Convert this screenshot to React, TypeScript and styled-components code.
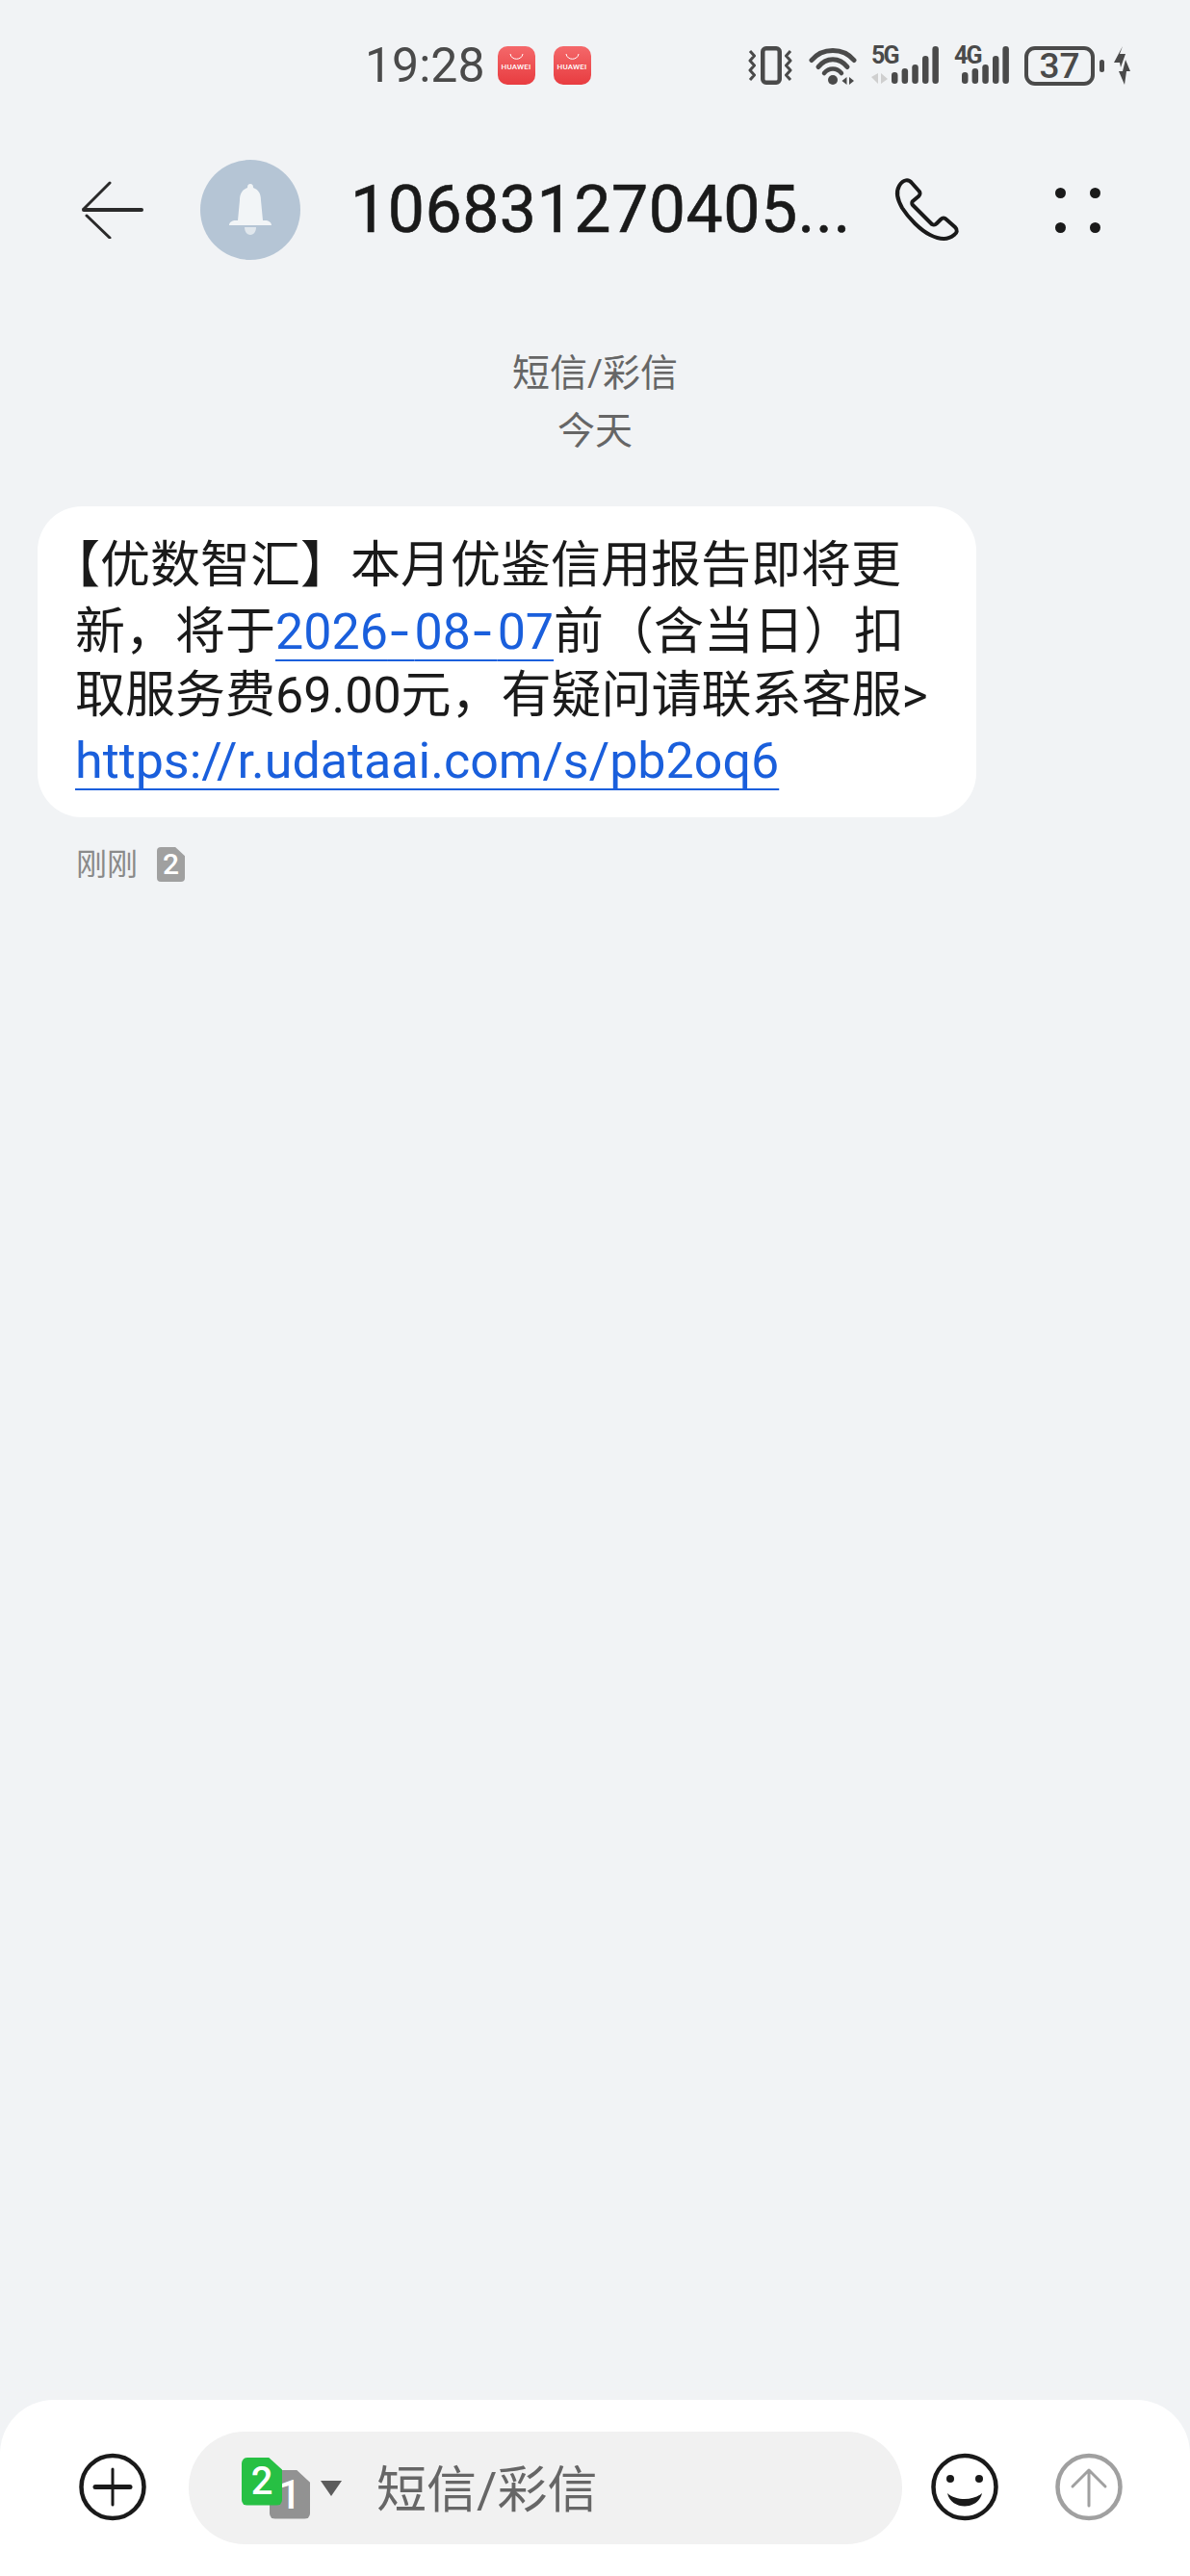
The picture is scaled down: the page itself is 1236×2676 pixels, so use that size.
import styled, { createGlobalStyle } from "styled-components";

const CJK = `Roboto, "Noto Sans CJK SC", sans-serif`;

const GlobalStyle = createGlobalStyle`
  html, body {
    margin: 0;
    padding: 0;
    background: #f1f3f5;
  }
  * {
    box-sizing: border-box;
  }
`;

const Screen = styled.div`
  width: 1236px;
  height: 2676px;
  display: flex;
  flex-direction: column;
  background: #f1f3f5;
  font-family: ${CJK};
  overflow: hidden;
`;

const StatusBar = styled.div`
  height: 136px;
  flex: none;
  display: flex;
  align-items: center;
  padding: 0 62px 0 379px;
  color: #4a4a4a;
`;

const Time = styled.span`
  font-size: 50px;
  margin-right: 13px;
`;

const AppBadge = styled.div`
  width: 39px;
  height: 40px;
  margin-right: 19px;
  padding-top: 6px;
  border-radius: 10px;
  background: linear-gradient(180deg, #f4686a, #e83c40);
  color: #fff;
  display: flex;
  flex-direction: column;
  align-items: center;
  font-size: 8px;
  line-height: 9px;
  font-weight: 500;
  font-family: Roboto, sans-serif;
  letter-spacing: 0.2px;
  svg {
    margin: 2px 0 3px;
  }
`;

const StatusIcons = styled.div`
  margin-left: auto;
  display: flex;
  align-items: center;
`;

const Network = styled.div<{ $gap: number; $w: number }>`
  position: relative;
  height: 40px;
  margin-left: ${(p) => p.$gap}px;
  width: ${(p) => p.$w}px;
`;

const NetLabel = styled.span`
  position: absolute;
  left: 0;
  top: -3px;
  font-family: Roboto, sans-serif;
  font-weight: 700;
  font-size: 25px;
  line-height: 26px;
  letter-spacing: -1.8px;
  color: #4a4a4a;
`;

const Battery = styled.div`
  width: 73px;
  height: 41px;
  margin-left: 16px;
  border: 4px solid #4a4a4a;
  border-radius: 11px;
  display: flex;
  align-items: center;
  justify-content: center;
  font-size: 37px;
  font-weight: 500;
  line-height: 1;
  color: #4a4a4a;
`;

const BatteryNub = styled.div`
  width: 5px;
  height: 13px;
  margin-left: 5px;
  border-radius: 3px;
  background: #4a4a4a;
`;

const Header = styled.div`
  height: 164px;
  flex: none;
  display: flex;
  align-items: center;
  padding-left: 85px;
`;

const Avatar = styled.div`
  width: 104px;
  height: 104px;
  margin-left: 59px;
  border-radius: 50%;
  background: #b5c5d5;
  display: flex;
  align-items: center;
  justify-content: center;
`;

const Title = styled.div`
  width: 515px;
  margin-left: 52px;
  font-size: 68px;
  font-weight: 400;
  letter-spacing: 0.5px;
  -webkit-text-stroke: 0.6px #1a1a1a;
  color: #1a1a1a;
  white-space: nowrap;
`;

const CallIcon = styled.svg`
  margin-left: 41px;
  flex: none;
`;

const MoreDots = styled.div`
  display: grid;
  grid-template-columns: 11px 11px;
  grid-template-rows: 11px 11px;
  gap: 25px;
  margin-left: 91px;
  span {
    border-radius: 50%;
    background: #1a1a1a;
  }
`;

const Thread = styled.div`
  flex: 1;
  padding-top: 58px;
`;

const SectionLabel = styled.div`
  text-align: center;
  font-size: 39px;
  line-height: 60px;
  color: #666;
`;

const Bubble = styled.div`
  width: 975px;
  height: 323px;
  margin: 48px 0 0 39px;
  padding: 28px 0 0 39px;
  border-radius: 46px;
  background: #fff;
  color: #1a1a1a;
  font-size: 52px;
`;

const MsgLine = styled.div`
  height: 67.7px;
  line-height: 68px;
  white-space: nowrap;
`;

const OpenBracket = styled.span`
  font-feature-settings: "halt";
`;

const MsgLink = styled.span`
  color: #1a5fdc;
  text-decoration: underline 2px #1a5fdc;
  text-decoration-skip-ink: none;
  text-underline-offset: 10.5px;
`;

const DateDash = styled.span`
  font-family: Inter, sans-serif;
  letter-spacing: 3.7px;
`;

const MetaRow = styled.div`
  display: flex;
  align-items: center;
  margin: 29px 0 0 79px;
  color: #8a8a8a;
  font-size: 32px;
  line-height: 40px;
`;

const SimBadge = styled.span<{ $w: number; $h: number; $bg: string; $size: number }>`
  display: flex;
  align-items: center;
  justify-content: center;
  border-radius: ${(p) => p.$w * 0.14}px;
  width: ${(p) => p.$w}px;
  height: ${(p) => p.$h}px;
  background: ${(p) => p.$bg};
  clip-path: polygon(0 0, 66% 0, 100% 26%, 100% 100%, 0 100%);
  color: #fff;
  font-family: Roboto, sans-serif;
  font-weight: 500;
  font-size: ${(p) => p.$size}px;
`;

const MetaSim = styled.div`
  margin-left: 20px;
`;

const Composer = styled.div`
  height: 183px;
  flex: none;
  display: flex;
  align-items: flex-start;
  padding: 33px 0 0 82px;
  background: #fff;
  border-radius: 56px 56px 0 0;
`;

const RoundIcon = styled.svg`
  margin-top: 22px;
  flex: none;
`;

const Input = styled.div`
  width: 741px;
  height: 117px;
  margin: 0 30px 0 44px;
  padding-left: 55px;
  border-radius: 58px;
  background: #f1f1f1;
  display: flex;
  align-items: center;
`;

const SimStack = styled.div`
  position: relative;
  width: 71px;
  height: 64px;
  flex: none;
`;

const SimFront = styled.div`
  position: absolute;
  left: 0;
  top: 0;
  z-index: 1;
`;

const SimBack = styled.div`
  position: absolute;
  right: 0;
  bottom: 0;
`;

const Caret = styled.div`
  width: 0;
  height: 0;
  margin: 1px 0 0 11px;
  border-left: 11.5px solid transparent;
  border-right: 11.5px solid transparent;
  border-top: 16px solid #5c5c5c;
`;

const Placeholder = styled.span`
  margin: 0 0 5px 36px;
  font-size: 52px;
  color: #666;
`;

const SendIcon = styled(RoundIcon)`
  margin-left: 59px;
`;

const Vibrate = () => (
  <svg width="46" height="40" viewBox="0 0 46 40" fill="none" stroke="#4a4a4a" strokeLinejoin="round">
    <rect x="15.25" y="2.25" width="17.5" height="35.5" rx="3.5" strokeWidth="4.5" />
    <path d="M2 5l4.5 5L2 15l4.5 5L2 25l4.5 5L2 35M44 5l-4.5 5 4.5 5-4.5 5 4.5 5-4.5 5 4.5 5" strokeWidth="3" />
  </svg>
);

const Wifi = () => (
  <svg width="50" height="40" viewBox="0 0 50 40" fill="none" stroke="#4a4a4a" strokeLinecap="round" style={{ marginLeft: 17 }}>
    <path d="M3 14.5C14 1 36 1 47 14.5" strokeWidth="5" />
    <path d="M10 21.5C18 11 32 11 40 21.5" strokeWidth="5" />
    <path d="M16 28C21 22 29 22 34 28" strokeWidth="4.5" />
    <circle cx="25" cy="35" r="5" fill="#4a4a4a" stroke="none" />
    <path d="M39.5 32v8l-5-4zM42 40v-8l5 4z" fill="#4a4a4a" stroke="none" />
  </svg>
);

const BARS = [
  { x: 0, top: 27 },
  { x: 10.6, top: 23 },
  { x: 21.3, top: 19 },
  { x: 32, top: 10 },
  { x: 42.4, top: 0 },
];

const SignalBars = ({ left, transfer }: { left: number; transfer?: boolean }) => (
  <svg width={left + 50} height="40" viewBox={`0 0 ${left + 50} 40`} style={{ position: "absolute", left: 0, top: 0 }}>
    {transfer && <path d="M7 28v11l-7-7zM10 39V28l7 6z" fill="#cfcfcf" />}
    {BARS.map((b) => (
      <rect key={b.x} x={left + b.x} y={b.top} width="6.5" height={39 - b.top} rx="3.2" fill="#4a4a4a" />
    ))}
  </svg>
);

const Bolt = () => (
  <svg width="17" height="40" viewBox="0 0 17 40" fill="#4a4a4a" style={{ marginLeft: 10 }}>
    <path d="M9 0L0 17h6l1 5 5-14H6zM12 14l5 12h-4l-2 14-6-14h4z" />
  </svg>
);

const BellIcon = () => (
  <svg width="50" height="54" viewBox="0 0 50 54" fill="#f2f5f7">
    <path d="M25 0c2 0 3 1 3 4 6 2 8 7 8 13l2 21 2 0c4 0 7 2 7 5H3c0-3 3-5 7-5l2 0 2-21c0-6 2-11 8-13 0-3 1-4 3-4z" />
    <path d="M19 45h12c0 4-2 8-6 8s-6-4-6-8z" opacity="0.7" />
  </svg>
);

const HuaweiMark = () => (
  <svg width="15" height="6" viewBox="0 0 15 6" fill="none" stroke="#fff" strokeWidth="1">
    <path d="M1 0c1 7 12 7 13 0" />
  </svg>
);

export default function App() {
  return (
    <Screen>
      <GlobalStyle />
      <StatusBar>
        <Time>19:28</Time>
        <AppBadge>
          <HuaweiMark />
          HUAWEI
        </AppBadge>
        <AppBadge>
          <HuaweiMark />
          HUAWEI
        </AppBadge>
        <StatusIcons>
          <Vibrate />
          <Wifi />
          <Network $gap={15} $w={70}>
            <NetLabel>5G</NetLabel>
            <SignalBars left={21} transfer />
          </Network>
          <Network $gap={16} $w={57}>
            <NetLabel>4G</NetLabel>
            <SignalBars left={8} />
          </Network>
          <Battery>37</Battery>
          <BatteryNub />
          <Bolt />
        </StatusIcons>
      </StatusBar>

      <Header>
        <svg width="64" height="60" viewBox="0 0 64 60" fill="none" stroke="#2a2a2a" strokeLinecap="round">
          <path d="M29 2L2 29" strokeWidth="3" />
          <path d="M2 30h60" strokeWidth="4" />
          <path d="M5 36l24 23" strokeWidth="3" />
        </svg>
        <Avatar>
          <BellIcon />
        </Avatar>
        <Title>106831270405...</Title>
        <CallIcon width="85" height="85" viewBox="0 0 85 85" fill="none" stroke="#1a1a1a" strokeWidth="4" strokeLinejoin="round">
          <path d="M14 17C18 10 24 10 27 14L35 23C36 25 36 26 34 28L28 33C27 34 27 36 28 37L48 57C50 58 51 58 53 56L57 52C59 50 61 50 63 52L72 60C75 63 74 66 71 68C64 74 56 73 46 68C36 63 24 51 17 40C12 31 10 24 14 17Z" />
        </CallIcon>
        <MoreDots>
          <span />
          <span />
          <span />
          <span />
        </MoreDots>
      </Header>

      <Thread>
        <SectionLabel>短信/彩信</SectionLabel>
        <SectionLabel>今天</SectionLabel>
        <Bubble>
          <MsgLine>
            <OpenBracket>【</OpenBracket>优数智汇】本月优鉴信用报告即将更
          </MsgLine>
          <MsgLine>
            新，将于
            <MsgLink>
              2026<DateDash>-</DateDash>08<DateDash>-</DateDash>07
            </MsgLink>
            前（含当日）扣
          </MsgLine>
          <MsgLine>取服务费69.00元，有疑问请联系客服&gt;</MsgLine>
          <MsgLine>
            <MsgLink>https://r.udataai.com/s/pb2oq6</MsgLink>
          </MsgLine>
        </Bubble>
        <MetaRow>
          刚刚
          <MetaSim>
            <SimBadge $w={29} $h={36} $bg="#a0a0a0" $size={30}>
              2
            </SimBadge>
          </MetaSim>
        </MetaRow>
      </Thread>

      <Composer>
        <RoundIcon width="70" height="71" viewBox="0 0 70 71" fill="none" stroke="#1a1a1a">
          <circle cx="35" cy="35.5" r="32.5" strokeWidth="4.5" />
          <path d="M17 35.5h36" strokeWidth="5" strokeLinecap="round" />
          <path d="M35 17v37" strokeWidth="3" strokeLinecap="round" />
        </RoundIcon>
        <Input>
          <SimStack>
            <SimFront>
              <SimBadge $w={42} $h={50} $bg="#27c044" $size={40}>
                2
              </SimBadge>
            </SimFront>
            <SimBack>
              <SimBadge $w={42} $h={51} $bg="#929292" $size={42}>
                1
              </SimBadge>
            </SimBack>
          </SimStack>
          <Caret />
          <Placeholder>短信/彩信</Placeholder>
        </Input>
        <RoundIcon width="70" height="71" viewBox="0 0 70 71" fill="none" stroke="#1a1a1a">
          <circle cx="35" cy="35.5" r="32.5" strokeWidth="4.5" />
          <circle cx="20" cy="27" r="4" fill="#1a1a1a" stroke="none" />
          <circle cx="50" cy="27" r="4" fill="#1a1a1a" stroke="none" />
          <path d="M17 42c4 18 32 18 36 0-9 8-27 8-36 0z" fill="#1a1a1a" stroke="none" />
        </RoundIcon>
        <SendIcon width="70" height="71" viewBox="0 0 70 71" fill="none" stroke="#a0a0a0">
          <circle cx="35" cy="35.5" r="32.5" strokeWidth="4.5" />
          <path d="M35 18v37M18 35l17-17 17 17" strokeWidth="3" strokeLinecap="round" strokeLinejoin="round" />
        </SendIcon>
      </Composer>
    </Screen>
  );
}
